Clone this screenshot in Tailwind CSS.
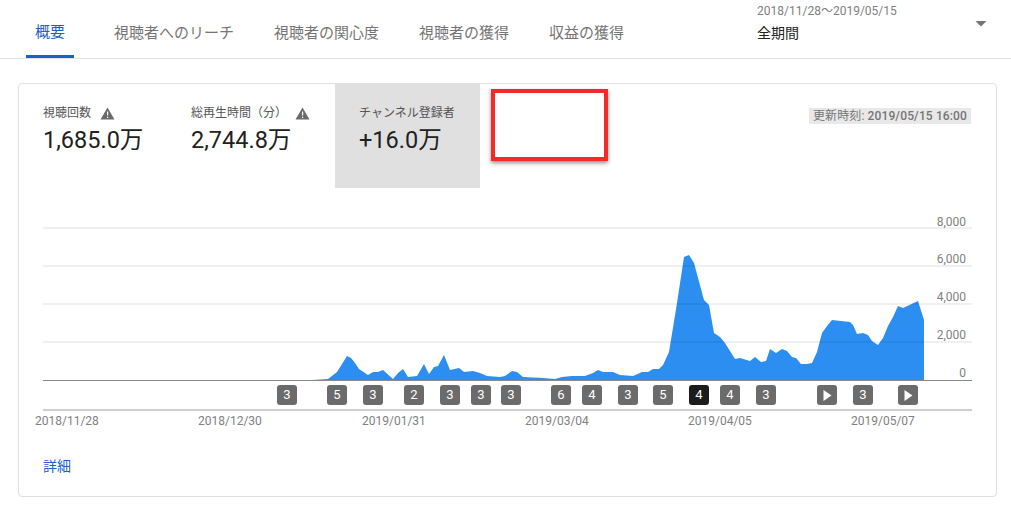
<!DOCTYPE html>
<html lang="ja">
<head>
<meta charset="utf-8">
<script src="https://cdn.jsdelivr.net/npm/@tailwindcss/browser@4"></script>
</head>
<body class="bg-white font-['Roboto','Noto_Sans_CJK_JP',sans-serif] w-[1011px] h-[508px] overflow-hidden">
<header class="relative flex h-[59px] border-b border-[#e0e0e0] pl-[26px] text-[15px] text-[#757575]">
  <nav class="flex gap-[40px]">
    <a class="flex items-center h-[58px] pt-[9px] px-[9px] border-b-[3px] border-[#1f5fc4] text-[#1f5fc4]">概要</a>
    <a class="flex items-center h-[58px] pt-[9px]">視聴者へのリーチ</a>
    <a class="flex items-center h-[58px] pt-[9px]">視聴者の関心度</a>
    <a class="flex items-center h-[58px] pt-[9px]">視聴者の獲得</a>
    <a class="flex items-center h-[58px] pt-[9px]">収益の獲得</a>
  </nav>
  <div class="ml-[133px] flex w-[231px] justify-between pt-[3px]">
    <div class="flex flex-col">
      <span class="text-[12px] leading-[16px] text-[#808080]">2018/11/28〜2019/05/15</span>
      <span class="mt-[4px] text-[14px] leading-[20px] text-[#212121]">全期間</span>
    </div>
    <svg class="mt-[18px] mr-[1px]" width="12" height="6" viewBox="0 0 12 6"><path d="M0.500 0H11.500L6 5.500Z" fill="#757575"/></svg>
  </div>
</header>
<main class="pt-[24px] pl-[18px] pr-[14px]">
  <section class="relative h-[414px] rounded-[4px] border border-[#e0e0e0]">
    <div class="relative flex h-[104px]">
      <div class="w-[148px] pl-[24px] pt-[20px]">
        <div class="flex items-center text-[12px] leading-[18px] text-[#555]">視聴回数
          <svg class="ml-[9px]" width="15" height="13" viewBox="0 0 15 13"><path d="M7.500 0.500L14.500 12.500H0.500Z" fill="#6a6a6a"/><path d="M7 4.500h1.200v4H7zM7 9.700h1.200v1.300H7z" fill="#fff"/></svg>
        </div>
        <div class="mt-[1px] text-[23.5px] leading-[34px] text-[#212121]">1,685.0万</div>
      </div>
      <div class="w-[168px] pl-[24px] pt-[20px]">
        <div class="flex items-center text-[12px] leading-[18px] text-[#555]">総再生時間（分）
          <svg class="ml-[8px]" width="15" height="13" viewBox="0 0 15 13"><path d="M7.500 0.500L14.500 12.500H0.500Z" fill="#6a6a6a"/><path d="M7 4.500h1.200v4H7zM7 9.700h1.200v1.300H7z" fill="#fff"/></svg>
        </div>
        <div class="mt-[1px] text-[23.5px] leading-[34px] text-[#212121]">2,744.8万</div>
      </div>
      <div class="w-[145px] bg-[#e0e0e0] pl-[24px] pt-[20px]">
        <div class="text-[12px] leading-[18px] text-[#555]">チャンネル登録者</div>
        <div class="mt-[1px] text-[23.5px] leading-[34px] text-[#212121]">+16.0万</div>
      </div>
      <div class="ml-auto mr-[25px] mt-[24px] h-[16px] bg-[#e8e8e8] px-[4px] text-[12px] leading-[16px] text-[#757575] whitespace-nowrap tracking-[0.13px]">更新時刻: <span class="font-medium">2019/05/15 16:00</span></div>
      <div class="absolute left-[472px] top-[5px] h-[72px] w-[117px] border-[4px] border-[#f32a2a] bg-white shadow-[0_2px_4px_rgba(0,0,0,0.45)]"></div>
    </div>
    <div class="relative h-[247px]">
      <svg class="absolute inset-0" width="977" height="247" viewBox="19 188 977 247">
        <path fill="#2b8ef0" d="M312 380L328 379L337 372L347 356L351 358L355 363L359 369L368 375L373 372L378 372L383 370L393 379L398 373L403 369L408 377L417 376L424 364L429 374L434 367L438 366L444 355L450 370L459 368L464 372L473 371L480 373L487 376L500 377L505 376L512 371L517 372L523 377L543 378L555 379L562 377L572 376L585 376L593 373L598 370L603 372L613 372L620 375L633 376L642 372L648 372L653 369L659 369L663 365L669 352L677 303L684 257L689 255L694 263L704 300L709 305L714 333L720 337L725 343L735 359L740 358L750 361L755 357L761 362L766 361L770 349L776 353L782 349L787 351L792 357L796 358L801 364L807 364L812 363L817 352L822 333L827 326L832 320L850 322L853 325L857 334L863 333L868 335L872 341L878 345L883 338L888 326L893 317L898 306L903 308L918 301L924 320L924 380Z"/>
        <g stroke="#000" stroke-opacity="0.08" stroke-width="1.500">
          <path d="M43 228H972M43 266H972M43 304H972M43 342H972"/>
        </g>
        <path d="M43 380.500H972" stroke="#8a8a8a" stroke-width="1"/>
        <path d="M43 410H972" stroke="#cfcfcf" stroke-width="2"/>
      </svg>
      <div class="text-[12px] leading-[14px] text-[#808080]">
        <span class="absolute right-[30px] top-[27px]">8,000</span>
        <span class="absolute right-[30px] top-[64px]">6,000</span>
        <span class="absolute right-[30px] top-[102px]">4,000</span>
        <span class="absolute right-[30px] top-[140px]">2,000</span>
        <span class="absolute right-[30px] top-[178px]">0</span>
        <span class="absolute left-[16px] top-[226px]">2018/11/28</span>
        <span class="absolute left-[179px] top-[226px]">2018/12/30</span>
        <span class="absolute left-[343px] top-[226px]">2019/01/31</span>
        <span class="absolute left-[506px] top-[226px]">2019/03/04</span>
        <span class="absolute left-[669px] top-[226px]">2019/04/05</span>
        <span class="absolute left-[832px] top-[226px]">2019/05/07</span>
      </div>
      <div class="text-[13px] text-white">
        <span class="absolute left-[258px] top-[197px] flex h-[20px] w-[20px] items-center justify-center rounded-[3px] bg-[#6b6b6b]">3</span>
        <span class="absolute left-[308px] top-[197px] flex h-[20px] w-[20px] items-center justify-center rounded-[3px] bg-[#6b6b6b]">5</span>
        <span class="absolute left-[344px] top-[197px] flex h-[20px] w-[20px] items-center justify-center rounded-[3px] bg-[#6b6b6b]">3</span>
        <span class="absolute left-[385px] top-[197px] flex h-[20px] w-[20px] items-center justify-center rounded-[3px] bg-[#6b6b6b]">2</span>
        <span class="absolute left-[421px] top-[197px] flex h-[20px] w-[20px] items-center justify-center rounded-[3px] bg-[#6b6b6b]">3</span>
        <span class="absolute left-[452px] top-[197px] flex h-[20px] w-[20px] items-center justify-center rounded-[3px] bg-[#6b6b6b]">3</span>
        <span class="absolute left-[482px] top-[197px] flex h-[20px] w-[20px] items-center justify-center rounded-[3px] bg-[#6b6b6b]">3</span>
        <span class="absolute left-[532px] top-[197px] flex h-[20px] w-[20px] items-center justify-center rounded-[3px] bg-[#6b6b6b]">6</span>
        <span class="absolute left-[563px] top-[197px] flex h-[20px] w-[20px] items-center justify-center rounded-[3px] bg-[#6b6b6b]">4</span>
        <span class="absolute left-[599px] top-[197px] flex h-[20px] w-[20px] items-center justify-center rounded-[3px] bg-[#6b6b6b]">3</span>
        <span class="absolute left-[634px] top-[197px] flex h-[20px] w-[20px] items-center justify-center rounded-[3px] bg-[#6b6b6b]">5</span>
        <span class="absolute left-[670px] top-[197px] flex h-[20px] w-[20px] items-center justify-center rounded-[3px] bg-[#1c1c1c]">4</span>
        <span class="absolute left-[701px] top-[197px] flex h-[20px] w-[20px] items-center justify-center rounded-[3px] bg-[#6b6b6b]">4</span>
        <span class="absolute left-[737px] top-[197px] flex h-[20px] w-[20px] items-center justify-center rounded-[3px] bg-[#6b6b6b]">3</span>
        <span class="absolute left-[798px] top-[197px] flex h-[20px] w-[20px] items-center justify-center rounded-[3px] bg-[#6b6b6b]"><svg width="9" height="11" viewBox="0 0 9 11"><path d="M0.500 0L8.500 5.500L0.500 11Z" fill="#fff"/></svg></span>
        <span class="absolute left-[834px] top-[197px] flex h-[20px] w-[20px] items-center justify-center rounded-[3px] bg-[#6b6b6b]">3</span>
        <span class="absolute left-[879px] top-[197px] flex h-[20px] w-[20px] items-center justify-center rounded-[3px] bg-[#6b6b6b]"><svg width="9" height="11" viewBox="0 0 9 11"><path d="M0.500 0L8.500 5.500L0.500 11Z" fill="#fff"/></svg></span>
      </div>
    </div>
    <div class="pl-[24px] pt-[21px] text-[14px] leading-[20px] text-[#1f5fc4]">詳細</div>
  </section>
</main>
</body>
</html>
